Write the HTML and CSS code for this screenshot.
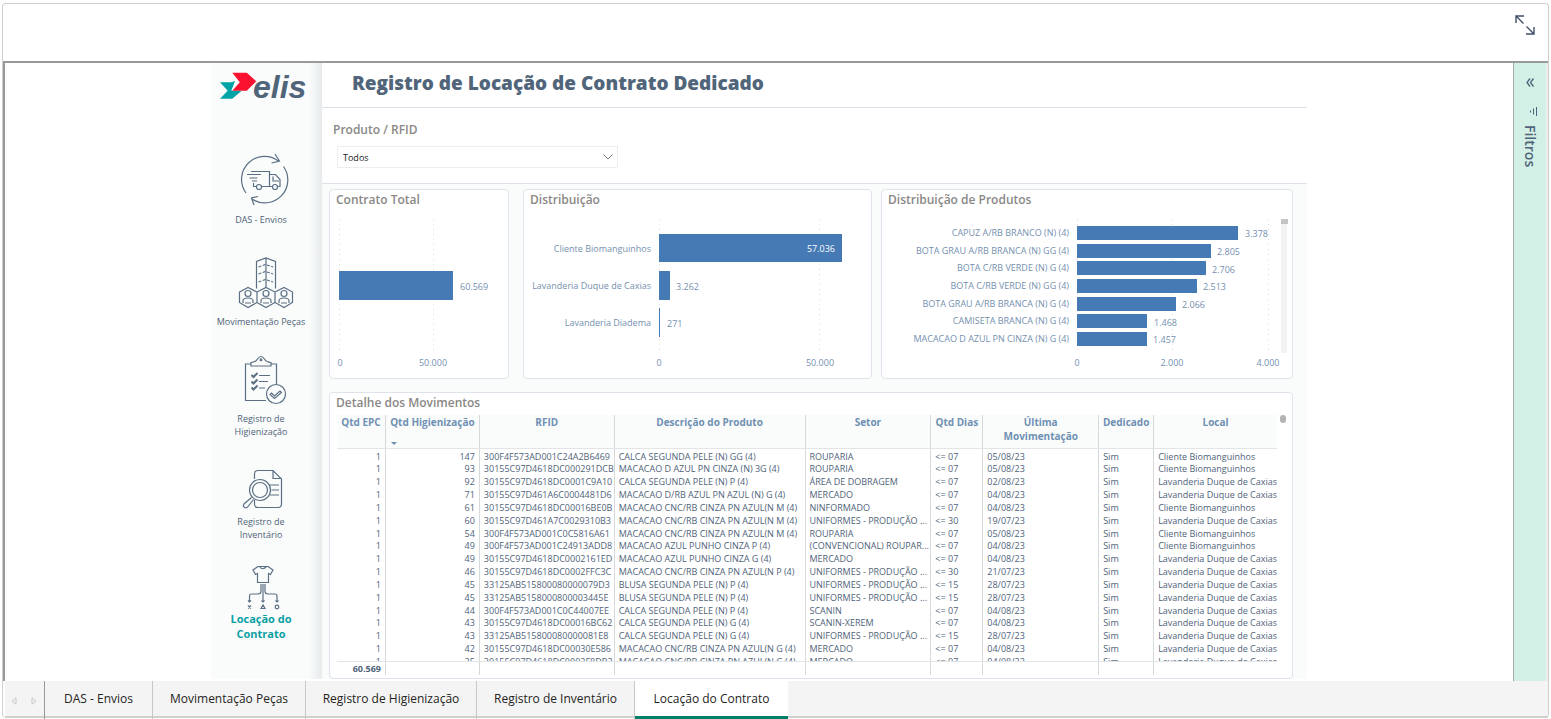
FILE: index.html
```html
<!DOCTYPE html>
<html lang="pt-BR">
<head>
<meta charset="utf-8">
<title>Registro de Locação de Contrato Dedicado</title>
<link rel="stylesheet" href="styles.css">
</head>
<body>
<div class="shell">
  <header class="topbar">
    <button class="expand" aria-label="Expandir">
      <svg width="20" height="20" viewBox="0 0 20 20" fill="none" stroke="#3f5068" stroke-width="1.4"><path d="M1 8V1h8M1 1l7.500 7.500M19 12v7h-8M19 19l-7.500-7.500"/></svg>
    </button>
  </header>
  <div class="viewer">
    <div class="stage">
      <div class="report">
        <aside class="side">
          <svg class="logo" viewBox="211 63 100 44" role="img" aria-label="elis">
            <path fill="#00a3a6" d="M220 82.300h11.500l3.500-1.300-3.700 9.700h10.400l-9.400 8h-12.300l7.700-8z"/>
            <path fill="#fb1230" d="M232.300 72.700h14.500l9.400 8.600-9.400 9.400h-14.500l7.500-8.500z"/>
            <text x="253" y="98" class="logo-text">elis</text>
          </svg>
          <nav class="nav">
            <a href="#" class="nav-item">
              <svg viewBox="211 150 100 63"><path d="M246 193A23 23 0 0 1 279 161.500M283.500 166.500A23 23 0 0 1 252 199M275 154l4.500 7-8 2M258 196.500l-6.500 1.500 2.500 7"/><path d="M251 171.500h18.500v14.500M247 174.500h14M249.500 178h8M252 181h5M253.500 183v3.500h2.500M262 186.500h10M269.500 174.500h6l4.500 5v7h-2M273 176.500v4.500h6"/><circle cx="259" cy="187" r="2.500"/><circle cx="275" cy="187" r="2.500"/></svg>
              <span>DAS - Envios</span>
            </a>
            <a href="#" class="nav-item">
              <svg viewBox="211 250 100 65"><path d="M256.500 288.500V261.500l9.500-3.500 9.500 3.500v27M266 258v30"/><path stroke-dasharray="3 1.500" d="M258.500 267l7-2.500 7.500 2.500M258.500 274l7-2.500 7.500 2.500M258.500 282l7-2.500 7.500 2.500"/><path d="M239.500 292l8.500-4.500 9 4.500v10.500l-9 5-8.500-5zM257 292l9-4.500 9 4.500v10.500l-9 5-9-5M275 292l9-4.500 8.500 4.500v10.500l-8.500 5-9-5z"/><circle cx="248" cy="293.500" r="3"/><circle cx="266" cy="293.500" r="3"/><circle cx="284" cy="293.500" r="3"/><path d="M243 303v-2q0-3 5-3t5 3v2M261 303v-2q0-3 5-3t5 3v2M279 303v-2q0-3 5-3t5 3v2M245 303h6M263 303h6M281 303h6"/></svg>
              <span>Movimentação Peças</span>
            </a>
            <a href="#" class="nav-item">
              <svg viewBox="211 352 100 60"><path d="M266 400.500h-20.500v-36.500h5.500M271 364h5.500v20.500M251 366v-3.500q5-.5 6.500-3.500 3.500-5 7 0 1.500 3 6.500 3.500v3.500z"/><circle cx="261" cy="359.800" r=".9"/><circle cx="276" cy="394" r="9.500"/><path stroke-width="2" d="M251.500 375l2 2 4-4M251.500 381.500l2 2 4-4M251.500 387.500l2 2 4-4"/><path d="M259 375.500h11M259 381.500h9M259 388h6M271.500 393l3 3 5.500-5 1.500 1.500-7 6-4.500-4z"/></svg>
              <span>Registro de<br>Higienização</span>
            </a>
            <a href="#" class="nav-item">
              <svg viewBox="211 462 100 53"><path d="M254.500 479V474q0-3.500 3.500-3.500h15l8.500 8.500v25q0 3.500-3.500 3.500h-20q-3.500 0-3.500-3.500v-4M273 470.500v8h8M269 485h10M271.500 490h7.500M270 495h9"/><circle cx="260" cy="490" r="10.500"/><circle cx="260" cy="490" r="7.500"/><path d="M251.500 497.500l-7.500 6.500q-1.500 2 .5 3.500 2 1 3.500-1l5.500-7"/></svg>
              <span>Registro de<br>Inventário</span>
            </a>
            <a href="#" class="nav-item current" aria-current="page">
              <svg viewBox="211 565 100 46"><path d="M258 566.500l-5 3.500 2.500 4.500 2-1v9h11v-9l2 1 2.500-4.500-5-3.500zM259.500 566.500q3 4.500 7 0M261 584v7q0 3-3 3h-6.500q-2 0-2 2v6M263 584v18M265 584v7q0 3 3 3h7q2 0 2 2v6"/><path d="M248 600.500l1.500 1.500 1.500-1.500M261.500 600.500l1.500 1.500 1.500-1.500M275.500 600.500l1.500 1.500 1.500-1.500M248 605.500l3 3M251 605.500l-3 3M263 605l-2 3.500h4z"/><circle cx="277" cy="607" r="1.800"/></svg>
              <span>Locação do<br>Contrato</span>
            </a>
          </nav>
        </aside>
        <main class="main">
          <h1 class="title">Registro de Locação de Contrato Dedicado</h1>
          <section class="slicer">
            <label for="prod">Produto / RFID</label>
            <div class="select-wrap">
              <select id="prod"><option>Todos</option></select>
              <svg width="10" height="6" viewBox="0 0 10 6" fill="none" stroke="#777"><path d="M.5.5L5 5 9.500.5"/></svg>
            </div>
          </section>
          <div class="cards">
            <section class="card c1">
              <h2>Contrato Total</h2>
              <svg class="chart" viewBox="330 208 178 170">
                <path class="grid" d="M339.500 219v134M433.500 219v134"/>
                <rect class="bar" x="339" y="271" width="114" height="29"/>
                <text x="460" y="290">60.569</text>
                <g class="mid"><text x="340" y="366">0</text><text x="433" y="366">50.000</text></g>
              </svg>
            </section>
            <section class="card c2">
              <h2>Distribuição</h2>
              <svg class="chart" viewBox="524 208 347 170">
                <path class="grid" d="M659.500 219v134M819.500 219v134"/>
                <rect class="bar" x="659" y="234" width="183" height="28"/>
                <rect class="bar" x="659" y="271" width="11" height="29"/>
                <rect class="bar" x="659" y="308" width="1" height="29"/>
                <g class="end"><text x="651" y="252">Cliente Biomanguinhos</text><text x="651" y="289">Lavanderia Duque de Caxias</text><text x="651" y="326">Lavanderia Diadema</text><text class="inv" x="835" y="252">57.036</text></g>
                <text x="676" y="290">3.262</text><text x="667" y="327">271</text>
                <g class="mid"><text x="659" y="366">0</text><text x="820" y="366">50.000</text></g>
              </svg>
            </section>
            <section class="card">
              <h2>Distribuição de Produtos</h2>
              <svg class="chart" viewBox="882 208 410 170">
                <path class="grid" d="M1077.500 219v134M1172.500 219v134M1268.500 219v134"/>
                <rect x="1281" y="219" width="6" height="134" fill="#f3f3f3"/><rect x="1281" y="219" width="7" height="5" fill="#c4c4c4"/>
                <g class="bar"><rect x="1077" y="226" width="161" height="14"/><rect x="1077" y="244" width="134" height="14"/><rect x="1077" y="261" width="129" height="14"/><rect x="1077" y="279" width="120" height="14"/><rect x="1077" y="297" width="99" height="14"/><rect x="1077" y="314" width="70" height="14"/><rect x="1077" y="332" width="70" height="14"/></g>
                <g class="end"><text x="1069" y="236">CAPUZ A/RB BRANCO (N) (4)</text><text x="1069" y="254">BOTA GRAU A/RB BRANCA (N) GG (4)</text><text x="1069" y="271">BOTA C/RB VERDE (N) G (4)</text><text x="1069" y="289">BOTA C/RB VERDE (N) GG (4)</text><text x="1069" y="307">BOTA GRAU A/RB BRANCA (N) G (4)</text><text x="1069" y="324">CAMISETA BRANCA (N) G (4)</text><text x="1069" y="342">MACACAO D AZUL PN CINZA (N) G (4)</text></g>
                <text x="1245" y="237">3.378</text><text x="1217" y="255">2.805</text><text x="1212" y="273">2.706</text><text x="1203" y="290">2.513</text><text x="1182" y="308">2.066</text><text x="1154" y="326">1.468</text><text x="1153" y="343">1.457</text>
                <g class="mid"><text x="1077" y="366">0</text><text x="1172" y="366">2.000</text><text x="1268" y="366">4.000</text></g>
              </svg>
            </section>
          </div>
          <section class="card detail">
            <h2>Detalhe dos Movimentos</h2>
            <div class="table-wrap">
            <table>
              <thead><tr><th>Qtd EPC</th><th class="sorted">Qtd Higienização<i></i></th><th>RFID</th><th>Descrição do Produto</th><th>Setor</th><th>Qtd Dias</th><th>Última<br>Movimentação</th><th>Dedicado</th><th>Local</th></tr></thead>
              <tbody>
                <tr><td>1</td><td>147</td><td>300F4F573AD001C24A2B6469</td><td>CALCA SEGUNDA PELE (N) GG (4)</td><td>ROUPARIA</td><td>&lt;= 07</td><td>05/08/23</td><td>Sim</td><td>Cliente Biomanguinhos</td></tr>
                <tr><td>1</td><td>93</td><td>30155C97D4618DC000291DCB</td><td>MACACAO D AZUL PN CINZA (N) 3G (4)</td><td>ROUPARIA</td><td>&lt;= 07</td><td>05/08/23</td><td>Sim</td><td>Cliente Biomanguinhos</td></tr>
                <tr><td>1</td><td>92</td><td>30155C97D4618DC0001C9A10</td><td>CALCA SEGUNDA PELE (N) P (4)</td><td>ÁREA DE DOBRAGEM</td><td>&lt;= 07</td><td>02/08/23</td><td>Sim</td><td>Lavanderia Duque de Caxias</td></tr>
                <tr><td>1</td><td>71</td><td>30155C97D461A6C0004481D6</td><td>MACACAO D/RB AZUL PN AZUL (N) G (4)</td><td>MERCADO</td><td>&lt;= 07</td><td>04/08/23</td><td>Sim</td><td>Lavanderia Duque de Caxias</td></tr>
                <tr><td>1</td><td>61</td><td>30155C97D4618DC00016BE0B</td><td>MACACAO CNC/RB CINZA PN AZUL(N M (4)</td><td>NINFORMADO</td><td>&lt;= 07</td><td>04/08/23</td><td>Sim</td><td>Cliente Biomanguinhos</td></tr>
                <tr><td>1</td><td>60</td><td>30155C97D461A7C0029310B3</td><td>MACACAO CNC/RB CINZA PN AZUL(N M (4)</td><td>UNIFORMES - PRODUÇÃO ...</td><td>&lt;= 30</td><td>19/07/23</td><td>Sim</td><td>Lavanderia Duque de Caxias</td></tr>
                <tr><td>1</td><td>54</td><td>300F4F573AD001C0C5816A61</td><td>MACACAO CNC/RB CINZA PN AZUL(N M (4)</td><td>ROUPARIA</td><td>&lt;= 07</td><td>05/08/23</td><td>Sim</td><td>Cliente Biomanguinhos</td></tr>
                <tr><td>1</td><td>49</td><td>300F4F573AD001C24913ADD8</td><td>MACACAO AZUL PUNHO CINZA P (4)</td><td>(CONVENCIONAL) ROUPAR...</td><td>&lt;= 07</td><td>04/08/23</td><td>Sim</td><td>Cliente Biomanguinhos</td></tr>
                <tr><td>1</td><td>49</td><td>30155C97D4618DC0002161ED</td><td>MACACAO AZUL PUNHO CINZA G (4)</td><td>MERCADO</td><td>&lt;= 07</td><td>04/08/23</td><td>Sim</td><td>Lavanderia Duque de Caxias</td></tr>
                <tr><td>1</td><td>46</td><td>30155C97D4618DC0002FFC3C</td><td>MACACAO CNC/RB CINZA PN AZUL(N P (4)</td><td>UNIFORMES - PRODUÇÃO ...</td><td>&lt;= 30</td><td>21/07/23</td><td>Sim</td><td>Lavanderia Duque de Caxias</td></tr>
                <tr><td>1</td><td>45</td><td>33125AB515800080000079D3</td><td>BLUSA SEGUNDA PELE (N) P (4)</td><td>UNIFORMES - PRODUÇÃO ...</td><td>&lt;= 15</td><td>28/07/23</td><td>Sim</td><td>Lavanderia Duque de Caxias</td></tr>
                <tr><td>1</td><td>45</td><td>33125AB5158000800003445E</td><td>BLUSA SEGUNDA PELE (N) P (4)</td><td>UNIFORMES - PRODUÇÃO ...</td><td>&lt;= 15</td><td>28/07/23</td><td>Sim</td><td>Lavanderia Duque de Caxias</td></tr>
                <tr><td>1</td><td>44</td><td>300F4F573AD001C0C44007EE</td><td>CALCA SEGUNDA PELE (N) P (4)</td><td>SCANIN</td><td>&lt;= 07</td><td>04/08/23</td><td>Sim</td><td>Lavanderia Duque de Caxias</td></tr>
                <tr><td>1</td><td>43</td><td>30155C97D4618DC00016BC62</td><td>CALCA SEGUNDA PELE (N) G (4)</td><td>SCANIN-XEREM</td><td>&lt;= 07</td><td>04/08/23</td><td>Sim</td><td>Lavanderia Duque de Caxias</td></tr>
                <tr><td>1</td><td>43</td><td>33125AB515800080000081E8</td><td>CALCA SEGUNDA PELE (N) G (4)</td><td>UNIFORMES - PRODUÇÃO ...</td><td>&lt;= 15</td><td>28/07/23</td><td>Sim</td><td>Lavanderia Duque de Caxias</td></tr>
                <tr><td>1</td><td>42</td><td>30155C97D4618DC00030E586</td><td>MACACAO CNC/RB CINZA PN AZUL(N G (4)</td><td>MERCADO</td><td>&lt;= 07</td><td>04/08/23</td><td>Sim</td><td>Lavanderia Duque de Caxias</td></tr>
                <tr><td>1</td><td>35</td><td>30155C97D4618DC0002F8DB2</td><td>MACACAO CNC/RB CINZA PN AZUL(N G (4)</td><td>MERCADO</td><td>&lt;= 07</td><td>04/08/23</td><td>Sim</td><td>Lavanderia Duque de Caxias</td></tr>
              </tbody>
              <tfoot><tr><td>60.569</td><td></td><td></td><td></td><td></td><td></td><td></td><td></td><td></td></tr></tfoot>
            </table>
            <span class="thumb"></span>
            </div>
          </section>
        </main>
      </div>
    </div>
    <aside class="filters">
      <button aria-label="Expandir filtros"><svg width="8" height="9" viewBox="0 0 8 9" fill="none" stroke="#4f6379" stroke-width="1.300"><path d="M4 .5l-3 4 3 4M7.500.5l-3 4 3 4"/></svg></button>
      <svg class="lines" width="8" height="9" viewBox="0 0 8 9" stroke="#4f6379"><path d="M7.500 0v9M4.500 1.500v6M1.500 3.500v2"/></svg>
      <span>Filtros</span>
    </aside>
  </div>
  <nav class="tabs">
    <div class="arrows">
      <button aria-label="Anterior"><svg width="6" height="8" viewBox="0 0 6 8" fill="none" stroke="#c8c8c8"><path d="M5 .8v6.400L1 4z"/></svg></button>
      <button aria-label="Próximo"><svg width="6" height="8" viewBox="0 0 6 8" fill="none" stroke="#c8c8c8"><path d="M1 .8v6.400L5 4z"/></svg></button>
    </div>
    <a href="#">DAS - Envios</a>
    <a href="#">Movimentação Peças</a>
    <a href="#">Registro de Higienização</a>
    <a href="#">Registro de Inventário</a>
    <a href="#" class="active">Locação do Contrato</a>
  </nav>
</div>
</body>
</html>
```
FILE: styles.css
```css
* { box-sizing: border-box; }
body {
  margin: 0;
  padding: 3px 2px 2px;
  min-height: 100vh;
  display: flex;
  background: #fff;
  color: #4f6379;
  font-family: "Open Sans", "Noto Sans", sans-serif;
  font-size: 9px;
}
button { border: 0; padding: 0; background: none; display: flex; }
a { color: inherit; text-decoration: none; }
h1, h2 { margin: 0; }
.shell {
  flex: 1;
  display: flex;
  flex-direction: column;
  border: 1px solid #cfcfcf;
  border-bottom: 0;
  border-radius: 4px;
}
.topbar {
  height: 57px;
  display: flex;
  justify-content: flex-end;
  padding: 11px 13px 0 0;
}
.viewer {
  flex: 1;
  display: flex;
  border: 2px solid #979a97;
  border-width: 2px 0 0 2px;
}
.stage { flex: 1; display: flex; justify-content: center; padding-bottom: 2px; }
.report { flex: 1; max-width: 1096px; display: flex; }
.side {
  flex: 0 0 111px;
  padding-right: 11px;
  background: linear-gradient(90deg, #fafcfb 98px, #e6eaec 111px);
}
.logo { display: block; width: 100%; }
.logo-text { font: italic 700 32px "Liberation Sans", Arial, sans-serif; fill: #50657a; }
.nav { display: flex; flex-direction: column; gap: 24px; padding-top: 43px; }
.nav-item { text-align: center; line-height: 13px; }
.nav-item svg { display: block; width: 100%; fill: none; stroke: #5b6f84; stroke-width: 1.2; }
.nav-item span { display: block; }
.current span { color: #0aa0a4; font-size: 11px; font-weight: 700; line-height: 15px; }

.main { flex: 1; min-width: 0; background: #fafcfb; }
.title {
  height: 45px;
  padding-left: 30px;
  background: #fff;
  border-bottom: 1px solid #dfe1ea;
  font-size: 19px;
  font-weight: 800;
  line-height: 40px;
  color: #50657a;
}
.slicer {
  height: 76px;
  padding: 14px 11px 0;
  background: #fff;
  border-bottom: 1px solid #dfe1ea;
}
.slicer label { display: block; font-size: 12px; font-weight: 600; line-height: 16px; color: #8a8886; }
.select-wrap { position: relative; width: 281px; margin: 8px 0 0 4px; }
.select-wrap select {
  display: block;
  width: 100%;
  height: 22px;
  padding: 0 5px;
  border: 1px solid #eee;
  background: #fff;
  appearance: none;
  color: #222;
  font: 9px "Open Sans", sans-serif;
}
.select-wrap svg { position: absolute; right: 5px; top: 8px; }

.cards {
  display: grid;
  grid-template-columns: 185fr 349fr 412fr;
  column-gap: 9px;
  padding: 5px 14px 0 7px;
}
.card {
  background: #fff;
  border: 1px solid #dfe3ec;
  border-radius: 4px;
  min-width: 0;
}
.c1 { margin-right: 5px; }
.card h2 { padding-left: 6px; font-size: 12px; font-weight: 600; line-height: 20px; color: #8a8886; }
.cards h2 { height: 18px; }
.chart { display: block; width: 100%; font-size: 9px; fill: #7590b0; }
.chart .grid { stroke: #dcdcdc; stroke-dasharray: 1 4; }
.chart .bar { fill: #457ab5; }
.chart .inv { fill: #fff; }
.mid { text-anchor: middle; }
.end { text-anchor: end; }

.detail { margin: 13px 14px 0 7px; padding-bottom: 3px; }
.detail h2 { height: 22px; }
.table-wrap { display: flex; gap: 3px; padding: 0 6px 0 7px; }
table { flex: 1; display: block; min-width: 0; }
thead, tbody, tfoot { display: block; }
tr { display: grid; grid-template-columns: 49fr 94fr 135fr 191fr 126fr 52fr 116fr 55fr 123fr; }
th, td {
  padding: 0 4px;
  border-right: 1px solid #d6d8da;
  white-space: nowrap;
  overflow: hidden;
  line-height: 13px;
}
th:last-child, td:last-child { padding-right: 0; border-right: 0; }
td:nth-child(-n+2) { text-align: right; }
th { height: 33px; padding: 0; line-height: 14px; font-size: 10px; font-weight: 700; color: #6f90b3; }
thead tr { background: #fafcfb; border-bottom: 1px solid #e2e4e6; }
.sorted i {
  display: block;
  width: 6px;
  margin: 13px 0 0 5px;
  border: 3px solid transparent;
  border-top-color: #6f90b3;
}
tbody { height: 212px; overflow: hidden; }
tbody tr { height: 13px; }
tbody tr:nth-child(6n+1) { height: 12px; }
tbody tr:first-child { height: 13px; }
tbody tr:first-child td { padding-top: 1px; }
tfoot tr { border-top: 1px solid #e2e4e6; }
tfoot td { height: 13px; font-weight: 700; font-size: 9px; }
.thumb { width: 6px; height: 8px; border-radius: 3px; background: #b3b3b3; }

.filters {
  flex: 0 0 35px;
  display: flex;
  flex-direction: column;
  align-items: center;
  padding-top: 15px;
  border-left: 1px solid #a5aaa8;
  border-right: 2px solid #eee;
  background: #d3f0e6;
}
.filters .lines { margin: 20px 0 9px 6px; }
.filters span { writing-mode: vertical-rl; font-size: 14px; font-weight: 600; line-height: 18px; }

.tabs {
  display: grid;
  grid-template-columns: 40px 108px 153px 171px 158px 153px;
  height: 37px;
  margin-left: 2px;
  background: #f4f4f4;
  border-bottom: 2px solid #d0d0d0;
  color: #252423;
  font-size: 12px;
  line-height: 35px;
  text-align: center;
  white-space: nowrap;
}
.arrows { display: flex; align-items: center; gap: 14px; padding-left: 6px; border-right: 1px solid #999; }
.tabs a { border-right: 1px solid #c8c8c8; }
.tabs .active { background: #fff; border-right: 0; border-bottom: 4px solid #04806a; }
```
